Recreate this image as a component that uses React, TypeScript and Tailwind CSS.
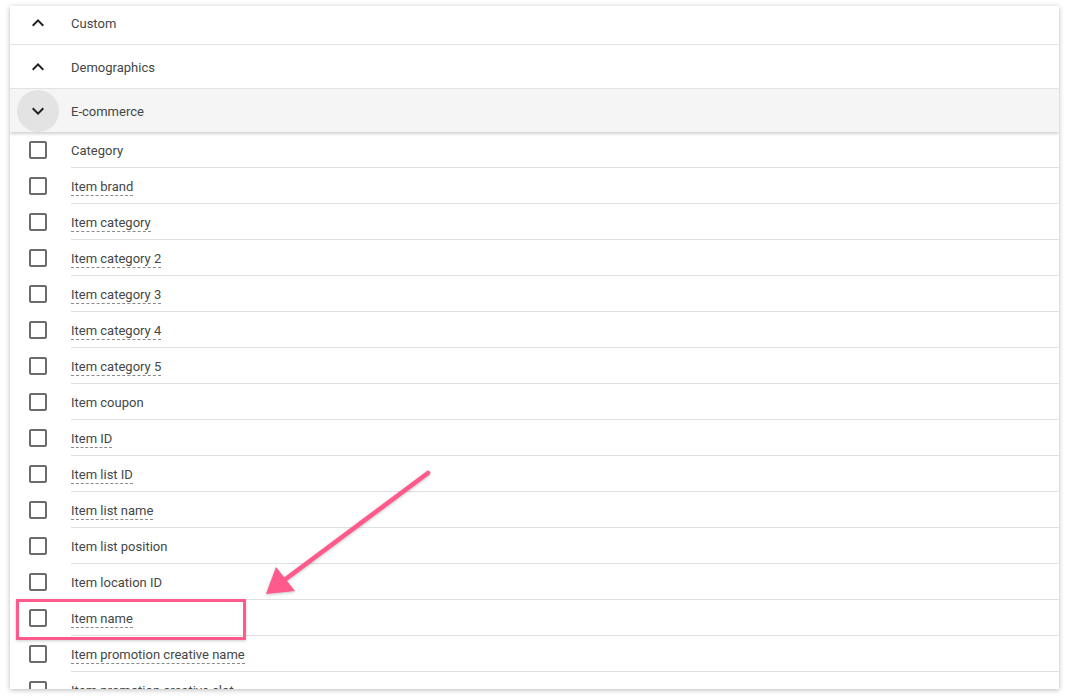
import React from 'react';

const items: { label: string; dashed: boolean }[] = [
  { label: 'Category', dashed: false },
  { label: 'Item brand', dashed: true },
  { label: 'Item category', dashed: true },
  { label: 'Item category 2', dashed: true },
  { label: 'Item category 3', dashed: true },
  { label: 'Item category 4', dashed: true },
  { label: 'Item category 5', dashed: true },
  { label: 'Item coupon', dashed: false },
  { label: 'Item ID', dashed: true },
  { label: 'Item list ID', dashed: true },
  { label: 'Item list name', dashed: true },
  { label: 'Item list position', dashed: false },
  { label: 'Item location ID', dashed: false },
  { label: 'Item name', dashed: true },
  { label: 'Item promotion creative name', dashed: true },
  { label: 'Item promotion creative slot', dashed: true },
];

function Chevron({ up }: { up: boolean }) {
  return (
    <svg width="24" height="24" viewBox="0 0 24 24" className={up ? '' : 'rotate-180'}>
      <path d="M12 8l-6 6 1.41 1.41L12 10.83l4.59 4.58L18 14z" fill="#202124" />
    </svg>
  );
}

function GroupRow({ label, open, className = '' }: { label: string; open?: boolean; className?: string }) {
  return (
    <div className={`flex items-center border-b border-[#e4e4e4] ${className}`}>
      <div className="w-[56px] flex justify-center">
        {open ? (
          <div className="w-[42px] h-[42px] rounded-full bg-[#e3e3e3] flex items-center justify-center">
            <Chevron up={false} />
          </div>
        ) : (
          <Chevron up />
        )}
      </div>
      <span className="ml-[5px] mt-[2px] text-[13px] text-[#444746]">{label}</span>
    </div>
  );
}

export default function App() {
  return (
    <div className="relative w-[1069px] h-[700px] bg-white overflow-hidden font-['Roboto',sans-serif]">
      <div className="ml-[10px] mt-[6px] w-[1049px] h-[683px] bg-white overflow-hidden shadow-[0_1px_5px_rgba(0,0,0,0.28)]">
        <GroupRow label="Custom" className="h-[39px] pb-[4px]" />
        <GroupRow label="Demographics" className="h-[44px]" />
        <div className="relative z-10 shadow-[0_2px_3px_rgba(0,0,0,0.18)]">
          <GroupRow label="E-commerce" open className="h-[43px] bg-[#f5f5f5] border-b-0" />
        </div>
        {items.map((it) => (
          <div key={it.label} className="flex items-center h-[36px]">
            <div className="w-[56px] flex justify-center">
              <div className="w-[18px] h-[18px] border-2 border-[#6b6b6b] rounded-[2px]" />
            </div>
            <div className="ml-[5px] flex-1 h-full flex items-center border-b border-[#e0e0e0]">
              <span
                className={`mt-[3px] text-[13px] text-[#444746] leading-[16px] ${
                  it.dashed ? 'border-b border-dashed border-[#8a8a8a]' : 'border-b border-transparent'
                }`}
              >
                {it.label}
              </span>
            </div>
          </div>
        ))}
      </div>

      {/* highlight + arrow overlay */}
      <div className="absolute left-[16px] top-[599px] w-[230px] h-[41px] border-[3px] border-[#ff5a8c] shadow-[0_1px_3px_rgba(0,0,0,0.2)]" />
      <svg className="absolute left-0 top-0" width="1069" height="700" style={{ filter: 'drop-shadow(0 1px 1.5px rgba(0,0,0,0.25))' }}>
        <line x1="428" y1="473" x2="283" y2="581" stroke="#ff5a8c" strokeWidth="4.5" strokeLinecap="round" />
        <polygon points="266,594 276,567 295,591" fill="#ff5a8c" />
      </svg>
    </div>
  );
}
